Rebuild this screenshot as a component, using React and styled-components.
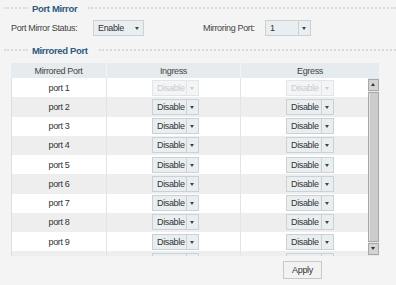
import React from "react";
import styled, { createGlobalStyle } from "styled-components";

const GlobalStyle = createGlobalStyle`
  html, body {
    margin: 0;
    padding: 0;
    background: #f4f4f4;
  }
  body {
    font-family: "Liberation Sans", Arial, sans-serif;
    font-size: 9px;
    letter-spacing: -0.35px;
    color: #333;
  }
`;

const ports = Array.from({ length: 10 }, (_, i) => i + 1);

export default function App() {
  return (
    <>
      <GlobalStyle />
      <Page>
        <SectionTitle>
          <Dots $w={24} />
          <span>Port Mirror</span>
          <Dots />
        </SectionTitle>

        <SettingsRow>
          <Label>Port Mirror Status:</Label>
          <Select $width={51} $noSep>
            <span className="value">Enable</span>
            <span className="arrow" />
          </Select>
          <Label className="second">Mirroring Port:</Label>
          <Select $width={46}>
            <span className="value">1</span>
            <span className="arrow" />
          </Select>
        </SettingsRow>

        <SectionTitle className="mirrored">
          <Dots $w={24} />
          <span>Mirrored Port</span>
          <Dots />
        </SectionTitle>

        <Table>
          <HeaderRow>
            <div>Mirrored Port</div>
            <div>Ingress</div>
            <div>Egress</div>
          </HeaderRow>
          <Body>
            <Rows>
              {ports.map((p) => (
                <Row key={p} $odd={p % 2 === 0}>
                  <PortCell>port {p}</PortCell>
                  <SelectCell>
                    <Select $width={47} $disabled={p === 1}>
                      <span className="value">Disable</span>
                      <span className="arrow" />
                    </Select>
                  </SelectCell>
                  <SelectCell>
                    <Select $width={48} $disabled={p === 1}>
                      <span className="value">Disable</span>
                      <span className="arrow" />
                    </Select>
                  </SelectCell>
                </Row>
              ))}
            </Rows>
            <ScrollBar>
              <ScrollButton $up />
              <Thumb />
              <ScrollButton />
            </ScrollBar>
          </Body>
        </Table>

        <Footer>
          <Button>Apply</Button>
        </Footer>
      </Page>
    </>
  );
}

const Page = styled.div`
  width: 396px;
  height: 285px;
  padding-top: 2px;
  box-sizing: border-box;
  overflow: hidden;
`;

const SectionTitle = styled.div`
  display: flex;
  align-items: center;
  height: 12px;
  padding-left: 4px;
  gap: 4px;
  span {
    color: #2d5a7d;
    font-weight: bold;
    font-size: 9.5px;
    white-space: nowrap;
  }
  &.mirrored {
    margin-top: 8px;
  }
`;

const Dots = styled.div`
  height: 0;
  border-top: 2px dotted #d8dcde;
  ${({ $w }) => ($w ? `width: ${$w}px; flex: none;` : "flex: 1; margin-left: 7px;")}
`;

const SettingsRow = styled.div`
  display: flex;
  align-items: center;
  height: 17px;
  margin-top: 5px;
  padding-left: 11px;
  .second {
    margin-left: 59px;
    width: 62px;
  }
`;

const Label = styled.span`
  width: 82px;
  color: #444;
  white-space: nowrap;
`;

const Select = styled.div`
  display: flex;
  align-items: center;
  box-sizing: border-box;
  width: ${({ $width }) => $width}px;
  height: 16px;
  border: 1px solid ${({ $disabled }) => ($disabled ? "#e2e6e8" : "#cad2d6")};
  background: ${({ $disabled }) => ($disabled ? "#f3f5f6" : "#e9eff1")};
  color: ${({ $disabled }) => ($disabled ? "#c8cccf" : "#333")};
  .value {
    flex: 1;
    padding-left: 4px;
    white-space: nowrap;
  }
  .arrow {
    position: relative;
    width: 11px;
    height: 100%;
    border-left: 1px solid
      ${({ $noSep, $disabled }) =>
        $noSep ? "transparent" : $disabled ? "#e2e6e8" : "#cad2d6"};
  }
  .arrow::after {
    content: "";
    position: absolute;
    left: 3px;
    top: 6px;
    border-left: 2.5px solid transparent;
    border-right: 2.5px solid transparent;
    border-top: 3px solid ${({ $disabled }) => ($disabled ? "#c8cccf" : "#444")};
  }
`;

const Table = styled.div`
  margin: 7px 0 0 11px;
  width: 368px;
`;

const HeaderRow = styled.div`
  display: grid;
  grid-template-columns: 95px 134px 1fr;
  height: 15px;
  background: #e5ebee;
  color: #444;
  div {
    display: flex;
    align-items: center;
    justify-content: center;
  }
  div + div {
    border-left: 1px solid #f2f5f6;
  }
`;

const Body = styled.div`
  display: flex;
  height: 178px;
`;

const Rows = styled.div`
  flex: 1;
  overflow: hidden;
  border-left: 1px solid #dcdfe0;
`;

const Row = styled.div`
  display: grid;
  grid-template-columns: 94px 134px 1fr;
  height: 19.25px;
  background: ${({ $odd }) => ($odd ? "#eeeeee" : "#ffffff")};
  > div + div {
    border-left: 1px solid #e2e4e5;
  }
`;

const PortCell = styled.div`
  display: flex;
  align-items: center;
  justify-content: center;
`;

const SelectCell = styled.div`
  display: flex;
  align-items: center;
  padding-left: 45px;
`;

const ScrollBar = styled.div`
  display: flex;
  flex-direction: column;
  width: 11px;
  padding: 1px 0;
  box-sizing: border-box;
  background: #e8e8e8;
`;

const ScrollButton = styled.div`
  position: relative;
  height: 10px;
  background: #d4d4d4;
  border: 1px solid #a8a8a8;
  &::after {
    content: "";
    position: absolute;
    left: 2px;
    top: 3px;
    border-left: 2.5px solid transparent;
    border-right: 2.5px solid transparent;
    ${({ $up }) =>
      $up ? "border-bottom: 3px solid #333;" : "border-top: 3px solid #333;"}
  }
`;

const Thumb = styled.div`
  flex: 1;
  margin: 1px 0;
  background: #cccccc;
  border: 1px solid #a8a8a8;
  box-shadow: inset 1px 0 0 #e4e4e4;
`;

const Footer = styled.div`
  display: flex;
  justify-content: flex-end;
  padding-right: 74px;
  margin-top: 5px;
`;

const Button = styled.button`
  width: 39px;
  height: 18px;
  padding: 0;
  font-family: inherit;
  font-size: 9px;
  letter-spacing: -0.35px;
  color: #333;
  background: #f2f2f2;
  border: 1px solid #c8c8c8;
`;
